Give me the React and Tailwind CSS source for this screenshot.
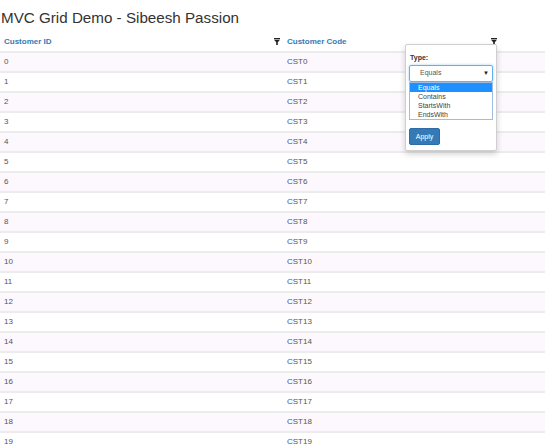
import React from "react";

const FilterIcon = ({ className = "" }) => (
  <svg className={className} width="6" height="7" viewBox="0 0 6 7" fill="#222">
    <rect x="0" y="0" width="6" height="1.2" />
    <path d="M0 1.8h6L3.8 4.2V7H2.2V4.2z" />
  </svg>
);

const rows = Array.from({ length: 20 }, (_, i) => ({
  id: i,
  code: `CST${i}`,
}));

const options = ["Equals", "Contains", "StartsWith", "EndsWith"];

export default function App() {
  return (
    <div className="relative w-[548px] h-[447px] overflow-hidden bg-white font-['Liberation_Sans',Arial,sans-serif] text-[#333]">
      {/* Title */}
      <div className="h-[32px] pl-[1px] pt-[9px] text-[15.2px] leading-[18px] text-[#333]">
        MVC Grid Demo - Sibeesh Passion
      </div>

      {/* Grid */}
      <div className="w-[545px]">
        <div className="grid grid-cols-[283px_1fr] h-[19px] items-center">
          <div className="flex items-center justify-between pl-[4px] pr-[3px]">
            <span className="text-[8px] font-bold text-[#337ab7]">Customer ID</span>
            <FilterIcon />
          </div>
          <div className="flex items-center justify-between pl-[4px] pr-[48px]">
            <span className="text-[8px] font-bold text-[#337ab7]">Customer Code</span>
            <FilterIcon />
          </div>
        </div>
        {rows.map((r) => (
          <div
            key={r.id}
            className={`grid grid-cols-[283px_1fr] h-[20px] items-center border-t-2 border-[#ececec] text-[8px] text-[#555] ${
              r.id % 2 === 0 ? "bg-[#fdf8fd]" : "bg-white"
            }`}
          >
            <div className="pl-[4px]">{r.id}</div>
            <div className="pl-[4px]">{r.code}</div>
          </div>
        ))}
      </div>

      {/* Filter popup */}
      <div className="absolute left-[405px] top-[44px] w-[92px] h-[107px] bg-white border border-[#cfcfcf] rounded-[2px] shadow-[0_3px_6px_rgba(0,0,0,0.18)] px-[3px] pt-[8px]">
        <div className="pl-[1px] text-[7px] font-bold text-[#333] leading-[9px]">Type:</div>
        <div className="mt-[3px] h-[17px] flex items-center justify-between border border-[#66afe9] rounded-[2px] shadow-[0_0_3px_rgba(102,175,233,0.6)] pl-[10px] pr-[3px] text-[7px] text-[#555]">
          <span>Equals</span>
          <span className="text-[6px] text-[#222]">▼</span>
        </div>
        <div className="h-[38px] border border-[#9fbde0] text-[7px] leading-[9px] text-[#444]">
          {options.map((o, i) => (
            <div
              key={o}
              className={`pl-[8px] h-[9px] ${i === 0 ? "bg-[#1e90ff] text-white" : ""}`}
            >
              {o}
            </div>
          ))}
        </div>
        <button
          type="button"
          className="mt-[8px] w-[31px] h-[17px] rounded-[2px] bg-[#337ab7] border border-[#2e6da4] text-white text-[7px] leading-none"
        >
          Apply
        </button>
      </div>
    </div>
  );
}
